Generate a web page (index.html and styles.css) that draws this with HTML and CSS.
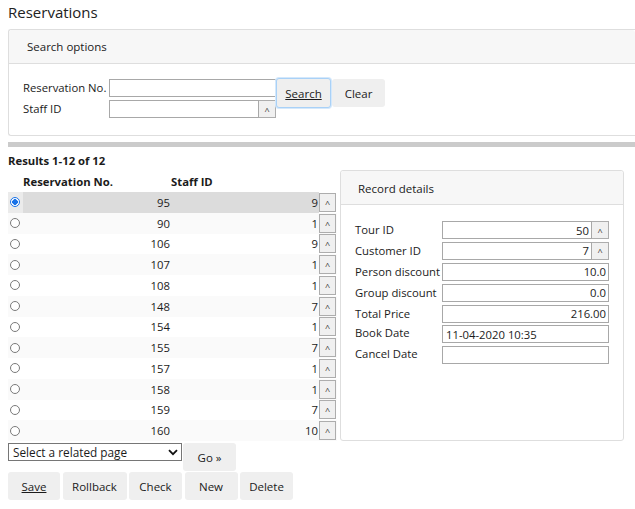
FILE: index.html
```html
<!DOCTYPE html>
<html>
<head>
<meta charset="utf-8">
<title>Reservations</title>
<link rel="stylesheet" href="styles.css">
</head>
<body>
<h1 class="title">Reservations</h1>

<section class="panel search-panel">
  <div class="panel-head">Search options</div>
  <div class="search-body">
    <div class="field-grid search-grid">
      <label class="lbl">Reservation No.</label>
      <input class="txt" type="text">
      <label class="lbl">Staff ID</label>
      <span class="lookup"><input class="txt" type="text"><span class="caret">^</span></span>
    </div>
    <button class="btn btn-search">Search</button>
    <button class="btn btn-clear">Clear</button>
  </div>
</section>

<div class="divider"></div>

<div class="main">
  <div class="results">
    <div class="results-title">Results 1-12 of 12</div>
    <table class="grid">
      <colgroup><col class="c-sel"><col class="c-res"><col class="c-staff"><col class="c-btn"></colgroup>
      <thead>
        <tr><th></th><th>Reservation No.</th><th>Staff ID</th><th></th></tr>
      </thead>
      <tbody>
        <tr class="selected"><td class="c-sel"><input type="radio" name="r" class="radio" checked></td><td class="c-res">95</td><td class="c-staff">9</td><td class="c-btn"><span class="caret">^</span></td></tr>
        <tr class="alt"><td class="c-sel"><input type="radio" name="r" class="radio"></td><td class="c-res">90</td><td class="c-staff">1</td><td class="c-btn"><span class="caret">^</span></td></tr>
        <tr><td class="c-sel"><input type="radio" name="r" class="radio"></td><td class="c-res">106</td><td class="c-staff">9</td><td class="c-btn"><span class="caret">^</span></td></tr>
        <tr class="alt"><td class="c-sel"><input type="radio" name="r" class="radio"></td><td class="c-res">107</td><td class="c-staff">1</td><td class="c-btn"><span class="caret">^</span></td></tr>
        <tr><td class="c-sel"><input type="radio" name="r" class="radio"></td><td class="c-res">108</td><td class="c-staff">1</td><td class="c-btn"><span class="caret">^</span></td></tr>
        <tr class="alt"><td class="c-sel"><input type="radio" name="r" class="radio"></td><td class="c-res">148</td><td class="c-staff">7</td><td class="c-btn"><span class="caret">^</span></td></tr>
        <tr><td class="c-sel"><input type="radio" name="r" class="radio"></td><td class="c-res">154</td><td class="c-staff">1</td><td class="c-btn"><span class="caret">^</span></td></tr>
        <tr class="alt"><td class="c-sel"><input type="radio" name="r" class="radio"></td><td class="c-res">155</td><td class="c-staff">7</td><td class="c-btn"><span class="caret">^</span></td></tr>
        <tr><td class="c-sel"><input type="radio" name="r" class="radio"></td><td class="c-res">157</td><td class="c-staff">1</td><td class="c-btn"><span class="caret">^</span></td></tr>
        <tr class="alt"><td class="c-sel"><input type="radio" name="r" class="radio"></td><td class="c-res">158</td><td class="c-staff">1</td><td class="c-btn"><span class="caret">^</span></td></tr>
        <tr><td class="c-sel"><input type="radio" name="r" class="radio"></td><td class="c-res">159</td><td class="c-staff">7</td><td class="c-btn"><span class="caret">^</span></td></tr>
        <tr class="alt"><td class="c-sel"><input type="radio" name="r" class="radio"></td><td class="c-res">160</td><td class="c-staff">10</td><td class="c-btn"><span class="caret">^</span></td></tr>
      </tbody>
    </table>
  </div>

  <section class="panel detail-panel">
    <div class="panel-head detail-head">Record details</div>
    <div class="detail-body">
      <div class="field-grid detail-grid">
        <label class="lbl">Tour ID</label>
        <span class="lookup"><input class="txt num" type="text" value="50"><span class="caret">^</span></span>
        <label class="lbl">Customer ID</label>
        <span class="lookup"><input class="txt num" type="text" value="7"><span class="caret">^</span></span>
        <label class="lbl">Person discount</label>
        <input class="txt num" type="text" value="10.0">
        <label class="lbl">Group discount</label>
        <input class="txt num" type="text" value="0.0">
        <label class="lbl">Total Price</label>
        <input class="txt num" type="text" value="216.00">
        <label class="lbl lbl-top">Book Date</label>
        <input class="txt date" type="text" value="11-04-2020 10:35">
        <label class="lbl lbl-top">Cancel Date</label>
        <input class="txt date" type="text">
      </div>
    </div>
  </section>
</div>

<div class="related">
  <span class="select-wrap">
    <select class="select"><option>Select a related page</option></select>
    <svg class="chev" width="10" height="7" viewBox="0 0 10 7"><path d="M1 1.2 L5 5.2 L9 1.2" fill="none" stroke="#111" stroke-width="1.8"/></svg>
  </span>
  <button class="btn btn-go">Go »</button>
</div>

<div class="actions">
  <button class="btn btn-save">Save</button>
  <button class="btn btn-rollback">Rollback</button>
  <button class="btn btn-check">Check</button>
  <button class="btn btn-new">New</button>
  <button class="btn btn-delete">Delete</button>
</div>
</body>
</html>
```

FILE: styles.css
```css
* { box-sizing: border-box; }

html { overflow: hidden; }

body {
  margin: 0 0 0 8px;
  font-family: "Segoe UI", "Open Sans", "Noto Sans", sans-serif;
  font-size: 11.3px;
  color: #1b1b1b;
  background: #fff;
}

.title {
  margin: 0;
  padding-top: 2px;
  font-size: 15px;
  font-weight: normal;
  line-height: 21px;
  color: #222;
}

.panel {
  border: 1px solid #dedede;
  border-radius: 3px;
  background: #fff;
}

.search-panel {
  margin-top: 6px;
  border-right: none;
  border-radius: 3px 0 0 3px;
}

.panel-head {
  height: 34px;
  line-height: 33px;
  padding-left: 18px;
  background: #f7f7f7;
  border-bottom: 1px solid #dedede;
  border-radius: 3px 3px 0 0;
  font-size: 11.5px;
}

.search-body {
  display: flex;
  align-items: flex-start;
  padding: 15px 0 17px 14px;
}

.field-grid {
  display: grid;
  align-items: center;
}

.search-grid {
  grid-template-columns: 86px 167px;
  grid-template-rows: 18px 18px;
  row-gap: 3px;
}

.lbl {
  white-space: nowrap;
  line-height: 18px;
}

.txt {
  display: block;
  width: 100%;
  height: 18px;
  margin: 0;
  padding: 0 2px;
  border: 1px solid #a8a8a8;
  background: #fff;
  font: inherit;
  color: #1b1b1b;
  outline: none;
}

.num { text-align: right; }

.date { padding-left: 3px; }

.lookup {
  display: flex;
  height: 18px;
}

.lookup .txt { flex: 1; width: auto; }

.caret {
  display: flex;
  align-items: center;
  justify-content: center;
  flex: none;
  width: 17px;
  height: 18px;
  border: 1px solid #adadad;
  border-left: none;
  background: #f0f0f0;
  font-size: 9px;
  line-height: 1;
  padding-top: 2px;
  color: #333;
}

.btn {
  height: 28px;
  margin: 0;
  padding: 0 12px;
  border: none;
  border-radius: 3px;
  background: #efefef;
  font: inherit;
  font-size: 11.5px;
  color: #1b1b1b;
}

.btn-search {
  height: 30px;
  margin-top: -1px;
  width: 55px;
  padding: 0;
  border: 1px solid #a9d1f7;
  box-shadow: 0 0 0 1px #d4e8fb;
  text-decoration: underline;
}

.btn-clear {
  width: 53px;
  padding: 0;
  margin-left: 1px;
}

.divider {
  margin-top: 6px;
  height: 5px;
  background: #cbcbcb;
}

.main {
  display: flex;
  gap: 3px;
}

.results {
  width: 329px;
}

.results-title {
  margin-top: 4px;
  line-height: 20px;
  font-weight: bold;
}

.grid {
  border-collapse: collapse;
  width: 329px;
  table-layout: fixed;
}

.grid th {
  height: 21px;
  padding: 0;
  text-align: left;
  font-weight: bold;
  vertical-align: middle;
}

.grid td {
  height: 20.75px;
  padding: 0;
  vertical-align: middle;
}

col.c-sel { width: 15px; }
col.c-res { width: 148px; }
col.c-staff { width: 148px; }
col.c-btn { width: 18px; }

.grid td.c-res { text-align: right; padding-right: 1px; }
.grid td.c-staff { text-align: right; padding-right: 1px; }

.grid tr.alt td { background: #fafafa; }
.grid tr.selected td { background: #dcdcdc; }
.grid tr.selected td.c-sel { background: #ebebeb; }
.grid tr.selected td.c-btn { background: #fff; }

.grid .caret {
  border-left: 1px solid #adadad;
  height: 19px;
}

.radio {
  -webkit-appearance: none;
  appearance: none;
  display: block;
  width: 10px;
  height: 10px;
  margin: 0 0 0 2px;
  border: 1px solid #7a7a7a;
  border-radius: 50%;
  background: #fff;
}

.radio:checked {
  border-color: #1a73e8;
  background: radial-gradient(circle, #1a73e8 0 2.6px, #fff 3px);
}

.detail-panel {
  margin-top: 23px;
  width: 284px;
}

.detail-head { padding-left: 17px; line-height: 35px; }

.detail-body {
  padding: 16px 14px;
}

.detail-grid {
  grid-template-columns: 87px 167px;
  grid-auto-rows: 18px;
  row-gap: 2.9px;
}

.lbl-top { line-height: 16px; align-self: start; }

.related {
  display: flex;
  align-items: flex-start;
  margin-top: 2px;
}

.select-wrap {
  position: relative;
  display: block;
  width: 174px;
  height: 18px;
}

.select {
  -webkit-appearance: none;
  appearance: none;
  display: block;
  width: 100%;
  height: 18px;
  margin: 0;
  padding: 0 0 0 4px;
  border: 1px solid #767676;
  border-radius: 0;
  background: #fff;
  font: inherit;
  font-size: 11.8px;
  color: #1b1b1b;
}

.chev {
  position: absolute;
  right: 4px;
  top: 6px;
  pointer-events: none;
}

.btn-go {
  width: 53px;
  padding: 0;
  margin-left: 1px;
}

.actions {
  display: flex;
  gap: 2.5px;
  margin-top: 1px;
}

.btn-save { width: 52px; padding: 0; text-decoration: underline; }
.btn-rollback { width: 64px; padding: 0; }
.btn-check { width: 53px; padding: 0; }
.btn-new { width: 53px; padding: 0; }
.btn-delete { width: 53px; padding: 0; }
```
